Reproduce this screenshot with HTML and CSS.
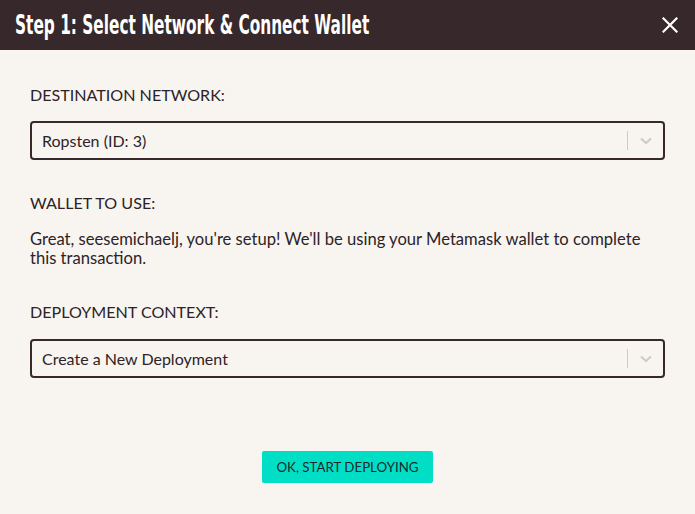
FILE: index.html
```html
<!DOCTYPE html>
<html lang="en">
<head>
<meta charset="utf-8">
<title>Step 1</title>
<link rel="stylesheet" href="styles.css">
</head>
<body>
<div class="modal">
  <header class="modal-header">
    <h1 class="modal-title"><span class="modal-title-text">Step 1: Select Network &amp; Connect Wallet</span></h1>
    <button class="close-btn" aria-label="Close">
      <svg width="16" height="16" viewBox="0 0 16 16"><path d="M1.5 1.5 L14.5 14.5 M14.5 1.5 L1.5 14.5" stroke="#fff" stroke-width="2.2" stroke-linecap="square"/></svg>
    </button>
  </header>
  <main class="modal-body">
    <section class="field">
      <div class="field-label">DESTINATION NETWORK:</div>
      <div class="select">
        <span class="select-value">Ropsten (ID: 3)</span>
        <span class="select-sep"></span>
        <span class="select-arrow"><svg width="14" height="10" viewBox="0 0 14 10"><path d="M2 2.5 L7 7 L12 2.5" fill="none" stroke="#cccccc" stroke-width="2.2"/></svg></span>
      </div>
    </section>
    <section class="field">
      <div class="field-label">WALLET TO USE:</div>
      <p class="field-text">Great, seesemichaelj, you're setup! We'll be using your Metamask wallet to complete this transaction.</p>
    </section>
    <section class="field">
      <div class="field-label">DEPLOYMENT CONTEXT:</div>
      <div class="select">
        <span class="select-value">Create a New Deployment</span>
        <span class="select-sep"></span>
        <span class="select-arrow"><svg width="14" height="10" viewBox="0 0 14 10"><path d="M2 2.5 L7 7 L12 2.5" fill="none" stroke="#cccccc" stroke-width="2.2"/></svg></span>
      </div>
    </section>
    <div class="actions">
      <button class="primary-btn">OK, START DEPLOYING</button>
    </div>
  </main>
</div>
</body>
</html>
```

FILE: styles.css
```css
* { box-sizing: border-box; }
html, body { margin: 0; padding: 0; }
body {
  background: #f8f5f1;
  font-family: "Lato", "Noto Sans", sans-serif;
  color: #2d2326;
  width: 695px;
  height: 514px;
  overflow: hidden;
}
.modal { display: flex; flex-direction: column; height: 514px; }
.modal-header {
  height: 50px;
  background: #36282b;
  display: flex;
  align-items: center;
  justify-content: space-between;
  padding: 0 17px 0 15px;
}
.modal-title {
  margin: 0;
  color: #ffffff;
  font-family: "DejaVu Sans Condensed", "DejaVu Sans", sans-serif;
  font-weight: 700;
  font-size: 27px;
  line-height: 30px;
  white-space: nowrap;
  width: 360px;
}
.modal-title-text {
  display: inline-block;
  transform: scaleX(0.632);
  transform-origin: left center;
}
.close-btn {
  background: none;
  border: 0;
  padding: 0;
  width: 16px;
  height: 16px;
  display: flex;
}
.modal-body {
  padding: 34px 30px 0 30px;
  display: flex;
  flex-direction: column;
}
.field { display: flex; flex-direction: column; }
.field + .field { margin-top: 32px; }
.field + .field:last-of-type { margin-top: 33px; }
.field-label {
  font-size: 16.1px;
  line-height: 22px;
  color: #2d2326;
}
.select {
  margin-top: 15px;
  height: 39px;
  border: 2px solid #36282b;
  border-radius: 4px;
  display: flex;
  align-items: center;
  padding-left: 10px;
}
.field:last-of-type .select { margin-top: 16px; }
.select-value {
  flex: 1;
  font-size: 16px;
  color: #2d2326;
}
.select-sep {
  width: 1px;
  height: 19px;
  background: #cccccc;
}
.select-arrow {
  width: 35px;
  display: flex;
  justify-content: center;
  align-items: center;
}
.field-text {
  margin: 16px 0 0 0;
  font-size: 16.6px;
  line-height: 19px;
  color: #2d2326;
}
.actions {
  margin-top: 73px;
  display: flex;
  justify-content: center;
}
.primary-btn {
  background: #00dfc6;
  border: 0;
  border-radius: 2px;
  width: 171px;
  height: 32px;
  font-family: "Lato", "Noto Sans", sans-serif;
  font-size: 13.3px;
  color: #1c2a2a;
  padding: 0;
  cursor: pointer;
}
```
